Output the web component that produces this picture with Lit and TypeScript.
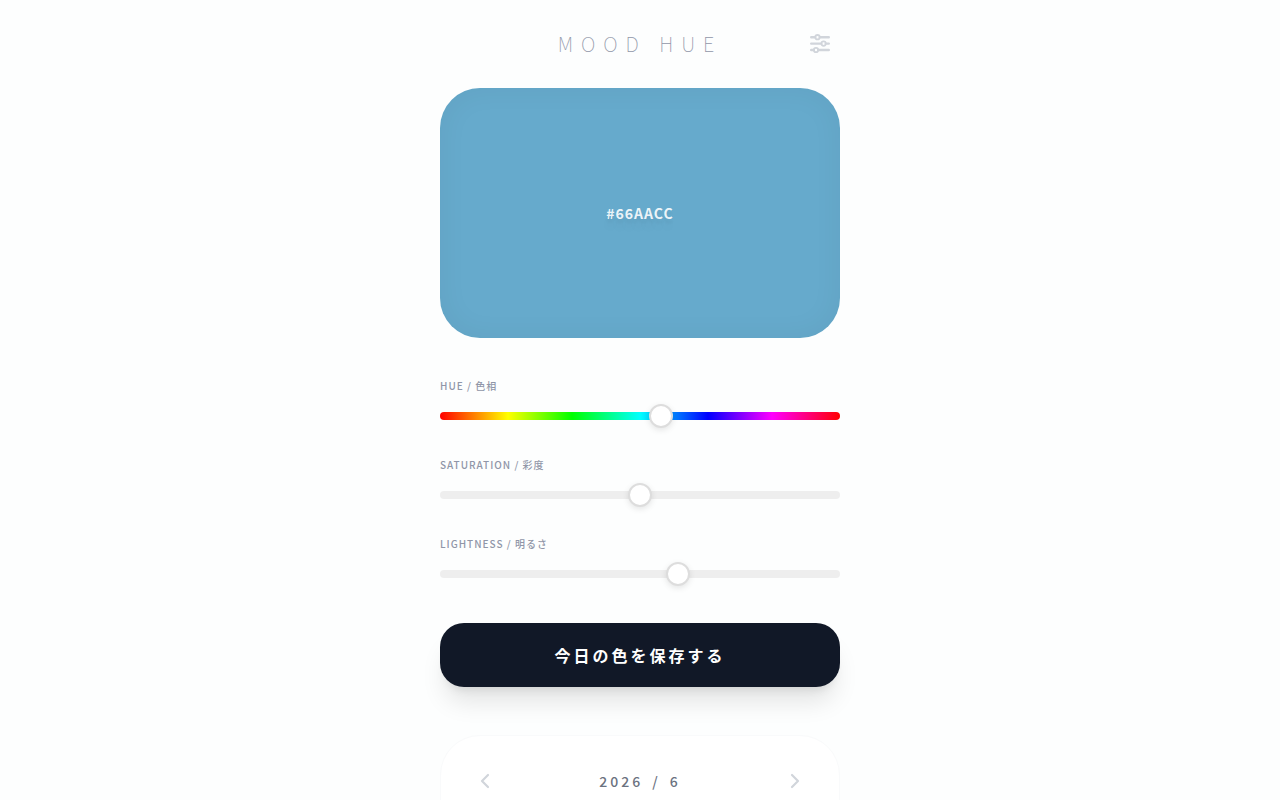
import { LitElement, html, css, svg } from "lit";
import { customElement, state } from "lit/decorators.js";

function hslToHex(h: number, s: number, l: number): string {
  const sat = s / 100;
  const light = l / 100;
  const a = sat * Math.min(light, 1 - light);
  const channel = (n: number) => {
    const k = (n + h / 30) % 12;
    const v = light - a * Math.max(-1, Math.min(k - 3, 9 - k, 1));
    return Math.round(v * 255).toString(16).padStart(2, "0");
  };
  return `#${channel(0)}${channel(8)}${channel(4)}`.toUpperCase();
}

@customElement("hue-slider")
class HueSlider extends LitElement {
  static properties = {
    label: { type: String },
    max: { type: Number },
    value: { type: Number },
    rainbow: { type: Boolean },
  };

  declare label: string;
  declare max: number;
  declare value: number;
  declare rainbow: boolean;

  static styles = css`
    :host {
      display: block;
    }
    .label {
      display: block;
      margin-bottom: 18px;
      font-size: 10px;
      line-height: 16px;
      font-weight: 500;
      letter-spacing: 1px;
      color: #9096a8;
    }
    .range {
      -webkit-appearance: none;
      appearance: none;
      display: block;
      width: 100%;
      height: 8px;
      margin: 0;
      border-radius: 4px;
      background: #eee;
      cursor: pointer;
    }
    .rainbow {
      background: linear-gradient(to right, #f00 0%, #ff0 17%, #0f0 33%, #0ff 50%, #00f 67%, #f0f 83%, #f00 100%);
    }
    .range::-webkit-slider-thumb {
      -webkit-appearance: none;
      box-sizing: border-box;
      width: 24px;
      height: 24px;
      border: 2px solid #ddd;
      border-radius: 50%;
      background: #fff;
      box-shadow: 0 2px 6px rgba(0, 0, 0, 0.1);
    }
  `;

  private onInput(e: Event) {
    this.value = Number((e.target as HTMLInputElement).value);
    this.dispatchEvent(new CustomEvent("change-value", { detail: this.value }));
  }

  render() {
    return html`
      <label class="label" for="range">${this.label}</label>
      <input id="range" class="range ${this.rainbow ? "rainbow" : ""}" type="range"
        min="0" max=${this.max} .value=${String(this.value)} @input=${this.onInput} />
    `;
  }
}

@customElement("app-root")
class AppRoot extends LitElement {
  @state() private hue = 200;
  @state() private saturation = 50;
  @state() private lightness = 60;
  @state() private month = new Date(2026, 5, 1);

  static styles = css`
    :host {
      display: block;
      min-height: 100vh;
      background: #fdfefe;
      font-family: "Noto Sans CJK JP", sans-serif;
    }
    .page {
      box-sizing: border-box;
      max-width: 448px;
      margin: 0 auto;
      padding: 24px 24px 48px;
    }
    .header {
      display: grid;
      grid-template-columns: 40px 1fr 40px;
      align-items: center;
      height: 40px;
      margin-bottom: 24px;
    }
    .title {
      grid-column: 2;
      margin: 0;
      text-align: center;
      font-size: 20px;
      line-height: 28px;
      font-weight: 100;
      letter-spacing: 8px;
      white-space: nowrap;
      color: #9096a8;
    }
    button {
      font-family: inherit;
      border: 0;
      cursor: pointer;
    }
    .icon-button {
      display: grid;
      place-items: center;
      width: 40px;
      height: 40px;
      padding: 0;
      background: none;
      color: #d1d5db;
    }
    .preview {
      display: flex;
      align-items: center;
      justify-content: center;
      height: 250px;
      margin-bottom: 40px;
      border-radius: 40px;
      box-shadow: inset 0 0 30px rgba(0, 0, 0, 0.05);
    }
    .hex {
      font-size: 14px;
      line-height: 20px;
      font-weight: 700;
      letter-spacing: 1px;
      color: rgba(255, 255, 255, 0.9);
      text-shadow: 0 4px 3px rgba(0, 0, 0, 0.05), 0 10px 8px rgba(0, 0, 0, 0.04);
    }
    .sliders {
      display: grid;
      gap: 37px;
      margin-bottom: 45px;
    }
    .save {
      display: block;
      width: 100%;
      padding: 20px;
      border-radius: 24px;
      background: #111827;
      color: #fff;
      font-size: 16px;
      line-height: 24px;
      font-weight: 700;
      letter-spacing: 3px;
      box-shadow: 0 20px 25px -5px rgba(0, 0, 0, 0.1), 0 8px 10px -6px rgba(0, 0, 0, 0.1);
    }
    .calendar {
      margin-top: 48px;
      padding: 25px 24px 80px;
      border: 1px solid #f9fafb;
      border-radius: 40px;
      background: #fff;
    }
    .month-bar {
      display: flex;
      align-items: center;
      justify-content: space-between;
    }
    .month {
      display: flex;
      gap: 9px;
      margin: 0;
      font-size: 14px;
      line-height: 20px;
      font-weight: 500;
      letter-spacing: 3px;
      color: #6b7280;
    }
  `;

  private shiftMonth(step: number) {
    this.month = new Date(this.month.getFullYear(), this.month.getMonth() + step, 1);
  }

  private chevron(d: string) {
    return svg`<svg width="20" height="20" viewBox="0 0 20 20" fill="none" stroke="currentColor" stroke-width="2.2" stroke-linecap="round" stroke-linejoin="round"><path d=${d}></path></svg>`;
  }

  render() {
    const hex = hslToHex(this.hue, this.saturation, this.lightness);
    return html`
      <main class="page">
        <header class="header">
          <h1 class="title">MOOD HUE</h1>
          <button class="icon-button" aria-label="Settings">
            <svg width="24" height="24" viewBox="0 0 24 24" fill="none" stroke="currentColor" stroke-width="2.4" stroke-linecap="round">
              <path d="M3.200 5.200h4M11.800 5.200h9M3.200 11.600h10M17.800 11.600h3M3.200 18h2.600M10.300 18h10.500"></path>
              <g stroke-width="1.800">
                <circle cx="9.500" cy="5.200" r="2.200"></circle>
                <circle cx="15.600" cy="11.600" r="2.200"></circle>
                <circle cx="8" cy="18" r="2.200"></circle>
              </g>
            </svg>
          </button>
        </header>
        <section class="preview" style="background-color: ${hex}">
          <span class="hex">${hex}</span>
        </section>
        <section class="sliders">
          <hue-slider label="HUE / 色相" .max=${360} .value=${this.hue} .rainbow=${true}
            @change-value=${(e: CustomEvent) => (this.hue = e.detail)}></hue-slider>
          <hue-slider label="SATURATION / 彩度" .max=${100} .value=${this.saturation}
            @change-value=${(e: CustomEvent) => (this.saturation = e.detail)}></hue-slider>
          <hue-slider label="LIGHTNESS / 明るさ" .max=${100} .value=${this.lightness}
            @change-value=${(e: CustomEvent) => (this.lightness = e.detail)}></hue-slider>
        </section>
        <button class="save">今日の色を保存する</button>
        <section class="calendar">
          <div class="month-bar">
            <button class="icon-button" aria-label="Previous month" @click=${() => this.shiftMonth(-1)}>
              ${this.chevron("M13 4l-6 6 6 6")}
            </button>
            <h2 class="month">
              <span>${this.month.getFullYear()}</span> <span>/</span> <span>${this.month.getMonth() + 1}</span>
            </h2>
            <button class="icon-button" aria-label="Next month" @click=${() => this.shiftMonth(1)}>
              ${this.chevron("M7 4l6 6-6 6")}
            </button>
          </div>
        </section>
      </main>
    `;
  }
}
